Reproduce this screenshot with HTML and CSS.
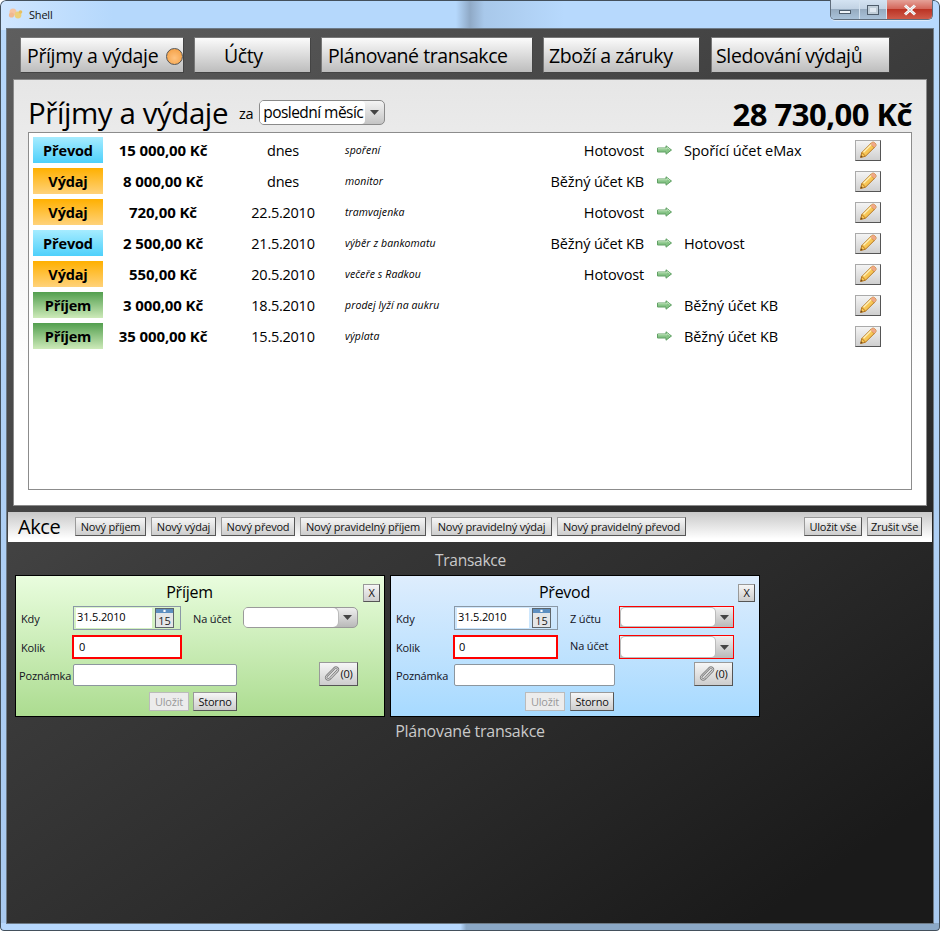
FILE: index.html
```html
<!DOCTYPE html>
<html lang="cs">
<head>
<meta charset="utf-8">
<title>Shell</title>
<link rel="stylesheet" href="styles.css">
</head>
<body>
<svg class="defs" width="0" height="0">
  <defs>
    <symbol id="pencil" viewBox="0 0 20 20">
      <path d="M2.5 17.5 L3.8 12.6 L13.8 2.6 Q15 1.5 16.4 2.6 L17.6 3.8 Q18.6 5 17.5 6.3 L7.4 16.3 Z" fill="#f7c655" stroke="#b5751f" stroke-width="1"/>
      <path d="M4 12.6 L7.4 16 M12.6 4 L16.2 7.5" stroke="#b5751f" stroke-width="1" fill="none"/>
      <path d="M5.5 12.2 L13.6 4.2" stroke="#fff0b8" stroke-width="1.4" fill="none"/>
      <path d="M13.6 2.9 Q15 1.5 16.4 2.6 L17.6 3.8 Q18.6 5 17.5 6.3 L16.2 7.5 L12.6 4 Z" fill="#f0a888"/>
      <path d="M2.5 17.5 L3.1 15.2 L4.8 16.9 Z" fill="#6b4a20"/>
    </symbol>
    <symbol id="arrow" viewBox="0 0 15 10">
      <path d="M0.5 3 H9 V0.8 L14.5 5 L9 9.2 V7 H0.5 Z" fill="#86c486" stroke="#5f9f63" stroke-width="1"/>
      <path d="M1 3.8 H10 V2.4 L13 4.6" fill="none" stroke="#c0e4bc" stroke-width="1"/>
    </symbol>
    <symbol id="calendar" viewBox="0 0 19 20">
      <rect x="0.5" y="0.5" width="18" height="19" fill="#e4e6e8" stroke="#5f666b"/>
      <rect x="1" y="1" width="17" height="4" fill="#5d8fc0"/>
      <rect x="8.4" y="1.8" width="2.2" height="2.2" fill="#fff"/>
      <text x="9.5" y="17" class="cal-num">15</text>
    </symbol>
    <symbol id="clip" viewBox="0 0 16 16">
      <path d="M13.4 4.6 L6 12.6 Q4.2 14.4 2.7 12.9 Q1.3 11.4 3.1 9.6 L10.3 2.3 Q12 0.9 13.4 2.2 Q14.7 3.5 13.3 5.1 L6.7 11.8" fill="none" stroke="#7f7f7f" stroke-width="2.4" stroke-linecap="round"/>
      <path d="M13.4 4.6 L6 12.6 Q4.2 14.4 2.7 12.9 Q1.3 11.4 3.1 9.6 L10.3 2.3 Q12 0.9 13.4 2.2 Q14.7 3.5 13.3 5.1 L6.7 11.8" fill="none" stroke="#d8d8d8" stroke-width="0.9" stroke-linecap="round"/>
    </symbol>
    <symbol id="caret" viewBox="0 0 9 5">
      <path d="M0 0 H9 L4.5 5 Z" fill="#444"/>
    </symbol>
  </defs>
</svg>
<div class="window">
  <header class="titlebar">
    <svg class="appicon" width="16" height="14" viewBox="0 0 16 14">
      <circle cx="5" cy="5" r="3.5" fill="#f5c4a0"/>
      <circle cx="3.5" cy="8" r="2.6" fill="#f0b890"/>
      <circle cx="10" cy="8" r="3.4" fill="#ecd078"/>
      <circle cx="12.5" cy="5" r="1.8" fill="#e8c060"/>
    </svg>
    <span class="wintitle">Shell</span>
    <div class="wincontrols">
      <span class="wbtn wbtn-min"><i class="min-glyph"></i></span>
      <span class="wbtn wbtn-max"><i class="max-glyph"></i></span>
      <span class="wbtn wbtn-close">
        <svg width="14" height="12" viewBox="0 0 14 12"><path d="M2 1.5 L12 10.5 M12 1.5 L2 10.5" stroke="#fff" stroke-width="3"/><path d="M2 1.5 L12 10.5 M12 1.5 L2 10.5" stroke="#5a6a78" stroke-width="0.6" opacity="0.5"/></svg>
      </span>
    </div>
  </header>
  <main class="client">
    <nav class="tabs">
      <button class="tab tab-1">Příjmy a výdaje <i class="dot"></i></button>
      <button class="tab tab-2">Účty</button>
      <button class="tab tab-3">Plánované transakce</button>
      <button class="tab tab-4">Zboží a záruky</button>
      <button class="tab tab-5">Sledování výdajů</button>
    </nav>
    <section class="panel">
      <div class="panel-head">
        <h1 class="panel-title">Příjmy a výdaje</h1>
        <span class="za">za</span>
        <div class="period"><span class="period-value">poslední měsíc</span><span class="period-arrow"><svg width="9" height="5"><use href="#caret"/></svg></span></div>
        <div class="total">28 730,00 Kč</div>
      </div>
      <div class="list">
        <div class="row"><span class="badge prevod">Převod</span><span class="amount">15 000,00 Kč</span><span class="date">dnes</span><span class="note">spoření</span><span class="from">Hotovost</span><svg class="arr" width="15" height="10"><use href="#arrow"/></svg><span class="to">Spořící účet eMax</span><span class="edit"><svg width="20" height="20"><use href="#pencil"/></svg></span></div>
        <div class="row"><span class="badge vydaj">Výdaj</span><span class="amount">8 000,00 Kč</span><span class="date">dnes</span><span class="note">monitor</span><span class="from">Běžný účet KB</span><svg class="arr" width="15" height="10"><use href="#arrow"/></svg><span class="to"></span><span class="edit"><svg width="20" height="20"><use href="#pencil"/></svg></span></div>
        <div class="row"><span class="badge vydaj">Výdaj</span><span class="amount">720,00 Kč</span><span class="date">22.5.2010</span><span class="note">tramvajenka</span><span class="from">Hotovost</span><svg class="arr" width="15" height="10"><use href="#arrow"/></svg><span class="to"></span><span class="edit"><svg width="20" height="20"><use href="#pencil"/></svg></span></div>
        <div class="row"><span class="badge prevod">Převod</span><span class="amount">2 500,00 Kč</span><span class="date">21.5.2010</span><span class="note">výběr z bankomatu</span><span class="from">Běžný účet KB</span><svg class="arr" width="15" height="10"><use href="#arrow"/></svg><span class="to">Hotovost</span><span class="edit"><svg width="20" height="20"><use href="#pencil"/></svg></span></div>
        <div class="row"><span class="badge vydaj">Výdaj</span><span class="amount">550,00 Kč</span><span class="date">20.5.2010</span><span class="note">večeře s Radkou</span><span class="from">Hotovost</span><svg class="arr" width="15" height="10"><use href="#arrow"/></svg><span class="to"></span><span class="edit"><svg width="20" height="20"><use href="#pencil"/></svg></span></div>
        <div class="row"><span class="badge prijem">Příjem</span><span class="amount">3 000,00 Kč</span><span class="date">18.5.2010</span><span class="note">prodej lyží na aukru</span><span class="from"></span><svg class="arr" width="15" height="10"><use href="#arrow"/></svg><span class="to">Běžný účet KB</span><span class="edit"><svg width="20" height="20"><use href="#pencil"/></svg></span></div>
        <div class="row"><span class="badge prijem">Příjem</span><span class="amount">35 000,00 Kč</span><span class="date">15.5.2010</span><span class="note">výplata</span><span class="from"></span><svg class="arr" width="15" height="10"><use href="#arrow"/></svg><span class="to">Běžný účet KB</span><span class="edit"><svg width="20" height="20"><use href="#pencil"/></svg></span></div>
      </div>
    </section>
    <div class="actions">
      <span class="actions-title">Akce</span>
      <button class="btn a1">Nový příjem</button>
      <button class="btn a2">Nový výdaj</button>
      <button class="btn a3">Nový převod</button>
      <button class="btn a4">Nový pravidelný příjem</button>
      <button class="btn a5">Nový pravidelný výdaj</button>
      <button class="btn a6">Nový pravidelný převod</button>
      <span class="spacer"></span>
      <button class="btn a7">Uložit vše</button>
      <button class="btn a8">Zrušit vše</button>
    </div>
    <h2 class="section section-1">Transakce</h2>
    <div class="cards">
      <form class="card card-green">
        <div class="card-title">Příjem</div>
        <button type="button" class="btn close">X</button>
        <div class="frow frow-1">
          <label class="lbl lbl-kdy">Kdy</label>
          <div class="datebox"><span class="dateval">31.5.2010</span><svg width="19" height="20"><use href="#calendar"/></svg></div>
          <label class="lbl lbl-acc">Na účet</label>
          <div class="combo"><span class="combo-field"></span><span class="combo-arrow"><svg width="9" height="5"><use href="#caret"/></svg></span></div>
        </div>
        <div class="frow frow-2">
          <label class="lbl lbl-kdy">Kolik</label>
          <div class="numbox">0</div>
        </div>
        <div class="frow frow-3">
          <label class="lbl lbl-note">Poznámka</label>
          <div class="notebox"></div>
          <button type="button" class="btn attach"><svg width="16" height="16"><use href="#clip"/></svg>(0)</button>
        </div>
        <div class="frow frow-4">
          <button type="button" class="btn save" disabled>Uložit</button>
          <button type="button" class="btn cancel">Storno</button>
        </div>
      </form>
      <form class="card card-blue">
        <div class="card-title">Převod</div>
        <button type="button" class="btn close">X</button>
        <div class="frow frow-1">
          <label class="lbl lbl-kdy b">Kdy</label>
          <div class="datebox b"><span class="dateval">31.5.2010</span><svg width="19" height="20"><use href="#calendar"/></svg></div>
          <label class="lbl lbl-acc b">Z účtu</label>
          <div class="combo req"><span class="combo-field"></span><span class="combo-arrow"><svg width="9" height="5"><use href="#caret"/></svg></span></div>
        </div>
        <div class="frow frow-2">
          <label class="lbl lbl-kdy b">Kolik</label>
          <div class="numbox b">0</div>
          <label class="lbl lbl-acc lbl-up b">Na účet</label>
          <div class="combo req combo-2"><span class="combo-field"></span><span class="combo-arrow"><svg width="9" height="5"><use href="#caret"/></svg></span></div>
        </div>
        <div class="frow frow-3">
          <label class="lbl lbl-note b">Poznámka</label>
          <div class="notebox b"></div>
          <button type="button" class="btn attach b"><svg width="16" height="16"><use href="#clip"/></svg>(0)</button>
        </div>
        <div class="frow frow-4 b">
          <button type="button" class="btn save" disabled>Uložit</button>
          <button type="button" class="btn cancel">Storno</button>
        </div>
      </form>
    </div>
    <h2 class="section section-2">Plánované transakce</h2>
  </main>
</div>
</body>
</html>
```
FILE: styles.css
```css
* { box-sizing: border-box; }
html, body { margin: 0; padding: 0; }
body { width: 940px; height: 931px; overflow: hidden; background: #fff; font-family: "Open Sans", "Noto Sans", sans-serif; color: #000; }
.defs { display: block; height: 0; }
.cal-num { font: 11px "Open Sans", sans-serif; fill: #222; text-anchor: middle; }
button { font-family: inherit; padding: 0; margin: 0; cursor: default; }

.window {
  width: 940px; height: 931px; padding: 0 7px 8px;
  display: flex; flex-direction: column;
  border-radius: 6px 6px 4px 4px;
  background: linear-gradient(90deg, #b7d8fd 0, #b7d8fd 49%, #8ba8c6 49.6%, #8ba8c6 100%) bottom / 100% 8px no-repeat,
    linear-gradient(90deg, #cfe6ff 0, #b5d8fc 12%, #b5d8fc 48.5%, #8fa9c6 50%, #a8c8ea 51.5%, #b7d9fd 60%, #b7d9fd 100%) top / 100% 30px no-repeat,
    linear-gradient(#b7d8fb, #a8c9ef);
  box-shadow: inset 0 0 0 1px #43505c;
}
.titlebar { height: 29px; flex: none; display: flex; align-items: flex-start; }
.appicon { margin: 7px 0 0 1px; }
.wintitle { font-size: 11px; letter-spacing: -0.2px; line-height: 14px; margin: 8px 0 0 5px; color: #111; }
.wincontrols { margin-left: auto; display: flex; height: 20px; border: 1px solid #5f6d7c; border-top: none; border-radius: 0 0 5px 5px; overflow: hidden; box-shadow: 0 1px 0 #dbe9f8; }
.wbtn { display: flex; align-items: center; justify-content: center; height: 19px; border-left: 1px solid #d4e2ef; background: linear-gradient(#d4e3f2 0, #c2d3e4 45%, #96abc0 50%, #a9c2d9 100%); }
.wbtn-min { width: 28px; border-left: none; }
.wbtn-max { width: 27px; }
.wbtn-close { width: 46px; background: linear-gradient(#e5a198 0, #d4675b 45%, #bb3425 50%, #cf5b4a 100%); }
.min-glyph { display: block; width: 12px; height: 4px; margin-top: 5px; background: #eef3f8; border: 1px solid #4e5d6c; }
.max-glyph { display: block; width: 12px; height: 10px; background: #dfe8f1; border: 1px solid #4e5d6c; box-shadow: inset 0 0 0 2px #c0ced9; }

.client {
  flex: 1; min-height: 0; display: flex; flex-direction: column;
  background: linear-gradient(146deg, #5e5e5e 0, #3c3c3c 42%, #2a2a2a 70%, #1a1a1a 92%);
  box-shadow: 0 0 0 1px #6d7a86;
}
.tabs { height: 50px; flex: none; padding-top: 8px; display: flex; align-items: flex-start; }
.tab {
  height: 36px; border: 1px solid #444; border-top-color: #777; border-left-color: #777; font-size: 19.5px; letter-spacing: -0.45px;
  background: linear-gradient(#fbfbfb, #ebebeb 25%, #bdbdbd); color: #000; flex: none; white-space: nowrap; line-height: 30px; padding-top: 2px;
}
.tab-1 { width: 164px; margin-left: 13px; padding-left: 6px; text-align: left; display: flex; align-items: center; white-space: pre; letter-spacing: -0.35px; }
.tab-2 { width: 117px; margin-left: 10px; text-align: left; padding-left: 29px; }
.tab-3 { width: 212px; margin-left: 10px; text-align: left; padding-left: 6px; }
.tab-4 { width: 157px; margin-left: 10px; text-align: left; padding-left: 5px; }
.tab-5 { width: 179px; margin-left: 11px; text-align: left; padding-left: 4px; letter-spacing: -0.35px; }
.dot { display: block; width: 17px; height: 17px; border-radius: 50%; margin-left: 3px; background: radial-gradient(circle at 50% 60%, #ffc27e, #f29b3c); border: 1px solid #555; }

.panel {
  height: 427px; flex: none; margin: 0 6px; padding: 0 14px 15px; border: 1px solid #8a8a8a;
  background: linear-gradient(#e6e6e6, #fff 70%);
  display: flex; flex-direction: column;
}
.panel-head { height: 52px; flex: none; display: flex; align-items: flex-start; }
.panel-title { margin: 13px 0 0 0; font-size: 29.5px; font-weight: 400; letter-spacing: -0.43px; line-height: 40px; white-space: nowrap; }
.za { font-size: 14.5px; line-height: 20px; margin: 24px 0 0 11px; letter-spacing: -0.3px; }
.period { margin: 20px 0 0 6px; width: 126px; height: 25px; display: flex; border: 1px solid #8a8a8a; border-radius: 5px; background: linear-gradient(#f4f4f4, #c4c4c4); overflow: hidden; }
.period-value { width: 105px; background: #fff; font-size: 15.5px; letter-spacing: -0.55px; line-height: 22px; padding-left: 3px; border-radius: 0 4px 4px 0; white-space: nowrap; overflow: hidden; }
.period-arrow { flex: 1; display: flex; align-items: center; justify-content: center; }
.total { margin: 13px 0 0 auto; font-size: 31px; font-weight: 700; letter-spacing: -0.5px; line-height: 42px; white-space: nowrap; }

.list { flex: 1; min-height: 0; border: 1px solid #8c8c8c; background: #fff; padding: 4px 0 0 4px; }
.row { height: 26px; margin-bottom: 5px; display: grid; grid-template-columns: 70px 120px 120px 2px 145px 154px 28px 12px 171px 26px; align-items: center; }
.badge { grid-column: 1; height: 26px; font-size: 14.5px; font-weight: 700; text-align: center; line-height: 27px; letter-spacing: -0.15px; }
.prevod { background: linear-gradient(#a6ecff, #4ed0fb); }
.vydaj { background: linear-gradient(#ffb000, #ffd27a); }
.prijem { background: linear-gradient(#539f4f, #cdeab9); }
.amount { grid-column: 2; font-size: 15px; font-weight: 700; text-align: center; letter-spacing: -0.1px; white-space: nowrap; }
.date { grid-column: 3; font-size: 14.5px; text-align: center; letter-spacing: -0.25px; }
.note { grid-column: 5; font-size: 10.5px; font-style: italic; letter-spacing: 0.1px; white-space: nowrap; }
.from { grid-column: 6; font-size: 14.5px; text-align: right; letter-spacing: -0.15px; white-space: nowrap; }
.arr { grid-column: 7; margin-left: 13px; }
.to { grid-column: 9; font-size: 14.5px; letter-spacing: -0.1px; white-space: nowrap; }
.edit { grid-column: 10; width: 26px; height: 21px; border: 1px solid #555; border-top-color: #aaa; border-left-color: #aaa; background: linear-gradient(#f4f4f4, #cfcfcf); display: flex; align-items: center; justify-content: center; }

.actions { height: 30px; flex: none; margin: 6px 1px 0; display: flex; align-items: center; background: linear-gradient(#c8c8c8, #fff 90%); padding-bottom: 1px; }
.actions-title { font-size: 20px; letter-spacing: -0.4px; margin-left: 10px; width: 57px; flex: none; line-height: 26px; }
.btn { height: 19px; flex: none; border: 1px solid #555; border-top-color: #999; border-left-color: #999; background: linear-gradient(#f6f6f6, #cdcdcd); font-size: 11px; letter-spacing: -0.2px; color: #111; white-space: nowrap; line-height: 16px; }
.a1 { width: 71px; }
.a2 { width: 65px; margin-left: 5px; }
.a3 { width: 74px; margin-left: 5px; }
.a4 { width: 126px; margin-left: 5px; }
.a5 { width: 121px; margin-left: 5px; }
.a6 { width: 129px; margin-left: 5px; }
.spacer { flex: 1; }
.a7 { width: 58px; }
.a8 { width: 55px; margin-left: 5px; margin-right: 10px; }

.section { margin: 0; font-weight: 400; font-size: 15.5px; letter-spacing: -0.25px; color: #c9c9c9; text-align: center; line-height: 22px; flex: none; }
.section-1 { margin-top: 7px; margin-left: 1px; }
.section-2 { margin-top: 3px; font-size: 16px; }
.cards { display: flex; gap: 5px; margin: 4px 0 0 8px; flex: none; }
.card { position: relative; width: 370px; height: 142px; border: 1px solid #000; flex: none; }
.card-green { background: linear-gradient(#e9fdde, #acdc90); }
.card-blue { background: linear-gradient(#deedfd, #a7daff); }
.card-title { text-align: center; font-size: 16px; line-height: 22px; height: 30px; padding: 5px 21px 0 0; letter-spacing: -0.25px; }
.close { position: absolute; left: 347px; top: 8px; width: 17px; height: 18px; line-height: 14px; font-size: 11px; }
.frow { display: flex; align-items: flex-start; font-size: 11px; letter-spacing: -0.15px; }
.frow-1 { height: 29px; }
.frow-2 { height: 29px; }
.frow-3 { height: 28px; }
.frow-4 { height: 19px; padding-left: 133px; gap: 4px; }
.frow-4.b { padding-left: 134px; gap: 5px; }
.lbl { line-height: 16px; white-space: nowrap; color: #112; }
.lbl-kdy { width: 52px; margin-left: 5px; margin-top: 5px; }
.lbl-kdy.b { width: 58px; }
.lbl-acc { width: 50px; margin-left: 12px; margin-top: 5px; }
.lbl-acc.b { width: 49px; }
.lbl-up { margin-top: 3px; }
.lbl-note { width: 54px; margin-left: 3px; margin-top: 4px; }
.lbl-note.b { width: 58px; margin-left: 5px; }
.datebox { width: 108px; height: 24px; border: 1px solid #8a98a6; padding: 1px 2px; display: flex; align-items: flex-start; gap: 3px; }
.dateval { width: 76px; height: 20px; background: #fff; padding-left: 1px; line-height: 18px; }
.datebox svg { flex: none; }
.datebox.b { width: 104px; }
.datebox.b .dateval { width: 72px; }
.numbox { width: 110px; height: 24px; margin-left: -1px; border: 2px solid #ff0000; background: #fff; padding-left: 5px; line-height: 20px; }
.numbox.b { width: 105px; padding-left: 4px; }
.combo { width: 115px; height: 21px; margin-top: 1px; display: flex; border: 1px solid #9a9a9a; border-radius: 5px; background: linear-gradient(#efefef, #b9b9b9); overflow: hidden; }
.combo.req { width: 115px; height: 22px; margin-top: 0; border: 1px solid #ff0000; border-radius: 0; }
.combo.req .combo-field { margin: 1px 0 1px 1px; border-radius: 4px; }
.combo.combo-2 { height: 24px; }
.combo-field { width: 94px; background: #fff; border-radius: 0 5px 5px 0; flex: none; box-shadow: 0 0 0 1px #bbb; }
.combo-arrow { flex: 1; display: flex; align-items: center; justify-content: center; }
.notebox { width: 164px; height: 22px; background: #fff; border: 1px solid #8c969e; border-radius: 2px; }
.notebox.b { width: 161px; }
.attach { width: 39px; height: 24px; margin-left: 82px; margin-top: -2px; display: flex; align-items: center; justify-content: center; font-size: 11px; }
.attach.b { margin-left: 79px; }
.save { width: 40px; color: #999; border-color: #bbb; background: #ececec; }
.cancel { width: 44px; }
```
